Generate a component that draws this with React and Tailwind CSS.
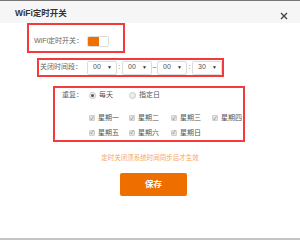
import React from 'react';

const font = { fontFamily: '"Liberation Sans", "Noto Sans CJK SC", sans-serif' };

const Select = ({ value }) => (
  <div className="shrink-0 w-[30px] h-[14px] border border-[#dcdcdc] rounded-[2px] bg-white flex items-center justify-between pl-[5px] pr-[4px]">
    <span className="text-[7px] text-[#555]">{value}</span>
    <span className="text-[5px] text-[#333]">▼</span>
  </div>
);

const Sep = ({ children }) => (
  <span className="shrink-0 w-[5px] text-center text-[7px] text-[#666]">{children}</span>
);

const Check = ({ label }) => (
  <div className="flex items-center gap-[3px]">
    <span className="w-[6px] h-[6px] bg-[#e4e4e4] border border-[#d0d0d0] rounded-[1px] flex items-center justify-center text-[5px] leading-none text-[#666]">✓</span>
    <span className="text-[7px] text-[#555] whitespace-nowrap">{label}</span>
  </div>
);

const Radio = ({ label, checked }) => (
  <div className="flex items-center gap-[3px]">
    <span className="w-[7px] h-[7px] rounded-full border border-[#c8c8c8] bg-[#eee] flex items-center justify-center">
      {checked && <span className="w-[3px] h-[3px] rounded-full bg-[#555]" />}
    </span>
    <span className="text-[7px] text-[#555] whitespace-nowrap">{label}</span>
  </div>
);

export default function App() {
  const days = ['星期一', '星期二', '星期三', '星期四', '星期五', '星期六', '星期日'];

  return (
    <div style={font} className="w-[300px] h-[240px] bg-white border-t border-[#777] border-b-2 border-b-[#c4c4c4] overflow-hidden">
      {/* header */}
      <div className="h-[22px] bg-[#f6f6f6] flex items-center justify-between pl-[15px] pr-[12px] pt-[2px]">
        <span className="text-[8.5px] font-bold text-[#333]">WiFi定时开关</span>
        <svg width="8" height="8" viewBox="0 0 8 8" className="mt-[6px]">
          <path d="M1 1 L7 7 M7 1 L1 7" stroke="#444" strokeWidth="1.4" />
        </svg>
      </div>

      {/* switch row */}
      <div className="ml-[27px] w-[98px] h-[30px] border-2 border-[#f43b3b] flex items-center pl-[5px] pt-[6px]">
        <span className="text-[7px] text-[#666] whitespace-nowrap">WiFi定时开关：</span>
        <div className="ml-[4px] w-[22px] h-[11px] border border-[#ddd] rounded-[2px] flex overflow-hidden">
          <div className="w-[11px] bg-[#ee7000]" />
          <div className="flex-1 bg-white" />
        </div>
      </div>

      {/* time range */}
      <div className="ml-[37px] mt-[5px] w-[187px] h-[19px] border-2 border-[#f43b3b] flex items-center pl-[1px]">
        <span className="shrink-0 text-[7px] text-[#666] w-[47px] whitespace-nowrap">关闭时间段：</span>
        <Select value="00" />
        <Sep>:</Sep>
        <Select value="00" />
        <Sep>–</Sep>
        <Select value="00" />
        <Sep>:</Sep>
        <Select value="30" />
      </div>

      {/* repeat */}
      <div className="ml-[53px] mt-[9px] w-[192px] h-[56px] border-2 border-[#f43b3b] pl-[7px] pt-[2px]">
        <div className="flex items-center h-[10px]">
          <span className="text-[7px] text-[#666] w-[27px] whitespace-nowrap">重复：</span>
          <Radio label="每天" checked />
          <div className="ml-[16px]">
            <Radio label="指定日" />
          </div>
        </div>
        <div className="grid grid-cols-[40px_42px_41px_40px] gap-y-[4px] ml-[27px] mt-[13px]">
          {days.map((d) => (
            <Check key={d} label={d} />
          ))}
        </div>
      </div>

      {/* note */}
      <div className="text-center text-[6.5px] text-[#f5a567] mt-[11px]">定时关闭须系统时间同步后才生效</div>

      {/* save */}
      <div className="flex justify-center mt-[10px] pl-[7px]">
        <button className="w-[67px] h-[23px] bg-[#ee6f00] rounded-[2px] text-white text-[8.5px] font-bold">保存</button>
      </div>
    </div>
  );
}
